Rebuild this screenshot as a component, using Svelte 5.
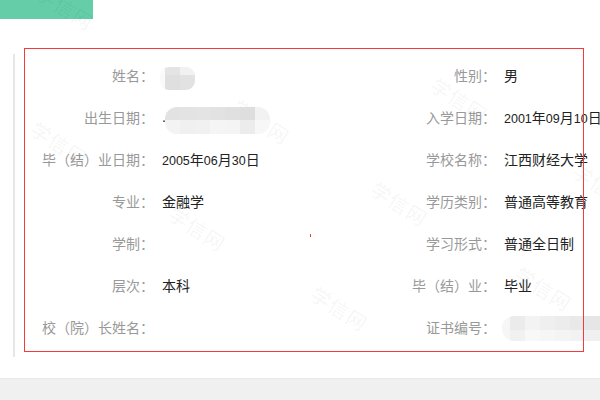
<script>
  const fields = [
    ["姓名", ""],
    ["性别", "男"],
    ["出生日期", "."],
    ["入学日期", "2001年09月10日"],
    ["毕（结）业日期", "2005年06月30日"],
    ["学校名称", "江西财经大学"],
    ["专业", "金融学"],
    ["学历类别", "普通高等教育"],
    ["学制", ""],
    ["学习形式", "普通全日制"],
    ["层次", "本科"],
    ["毕（结）业", "毕业"],
    ["校（院）长姓名", ""],
    ["证书编号", ""],
  ];

  const marks = [
    [41, 114], [243, 92], [441, 70], [381, 174], [179, 199],
    [321, 279], [525, 259], [583, 156], [47, -22],
  ];

  // mosaic patches hiding personal data
  const patches = [
    {
      x: 160, y: 67, w: 35, h: 23, radius: "9px",
      cells: [
        [5, 8, "#fafafa"], [15, 8, "#e4e4e4"], [15, 8, "#f1f1f1"],
        [5, 15, "#fafafa"], [15, 15, "#dfdfdf"], [15, 15, "#e2e2e2"],
      ],
    },
    {
      x: 165, y: 107, w: 105, h: 27, radius: "12px",
      cells: [
        [15, 13, "#e2e2e2"], [15, 13, "#e3e3e3"], [15, 13, "#e4e4e4"], [15, 13, "#e2e2e2"],
        [15, 13, "#e0e0e0"], [15, 13, "#dedede"], [15, 13, "#f2f2f2"],
        [15, 14, "#f3f3f3"], [15, 14, "#f0f0f0"], [15, 14, "#f1f1f1"], [15, 14, "#f5f5f5"],
        [15, 14, "#f4f4f4"], [15, 14, "#ececec"], [15, 14, "#f7f7f7"],
      ],
    },
    {
      x: 502, y: 316, w: 98, h: 25, radius: "12px 0 0 12px",
      cells: [
        [8, 14, "#f6f6f6"], [15, 14, "#ebebeb"], [15, 14, "#f3f3f3"], [15, 14, "#efefef"],
        [15, 14, "#ececec"], [15, 14, "#e9e9e9"], [15, 14, "#e6e6e6"],
        [8, 11, "#f6f6f6"], [15, 11, "#f1f1f1"], [15, 11, "#f8f8f8"], [15, 11, "#f6f6f6"],
        [15, 11, "#f4f4f4"], [15, 11, "#f2f2f2"], [15, 11, "#f0f0f0"],
      ],
    },
  ];

  function parts(value) {
    return value.split(/(\d+)/).filter((p) => p !== "");
  }
</script>

<div class="page">
  <div class="tab"><span>证书</span></div>

  <section class="info">
    {#each fields as [label, value]}
      <div class="field">
        <span class="label">{label}：</span>
        <span class="value">
          {#each parts(value) as part}
            {#if /^\d+$/.test(part)}<span class="num">{part}</span>{:else}{part}{/if}
          {/each}
        </span>
      </div>
    {/each}
  </section>

  <div class="footer"></div>

  {#each marks as [x, y]}
    <span class="mark" style="left: {x}px; top: {y}px">学信网</span>
  {/each}

  {#each patches as p}
    <div
      class="patch"
      style="left: {p.x}px; top: {p.y}px; width: {p.w}px; height: {p.h}px; border-radius: {p.radius}"
    >
      {#each p.cells as [w, h, color]}
        <i style="width: {w}px; height: {h}px; background: {color}"></i>
      {/each}
    </div>
  {/each}

  <div class="outline"></div>
  <div class="tick"></div>
</div>

<style>
  :global(body) {
    margin: 0;
  }

  .page {
    position: relative;
    width: 600px;
    height: 400px;
    overflow: hidden;
    background: #fff;
    font-family: "Liberation Sans", "Noto Sans CJK SC", sans-serif;
    font-size: 14px;
  }

  .tab {
    width: 93px;
    height: 19px;
    overflow: hidden;
    background: #66cda9;
    color: #fff;
    box-sizing: border-box;
    padding-left: 11px;
    line-height: 6px;
    font-size: 16px;
  }

  .tab span {
    display: block;
    margin-top: -10px;
  }

  .info {
    display: grid;
    grid-template-columns: 342px 342px;
    grid-auto-rows: 42px;
    width: 700px;
    height: 303px;
    box-sizing: border-box;
    margin: 35px 0 0 13px;
    border-left: 2px solid #e6e6e6;
  }

  .field {
    display: flex;
    align-items: center;
    gap: 8px;
    white-space: nowrap;
  }

  .label {
    width: 139px;
    flex: none;
    text-align: right;
    color: #999;
  }

  .value {
    color: #222;
  }

  .num {
    font-size: 12.5px;
  }

  .footer {
    height: 22px;
    margin-top: 21px;
    background: #f0f0f0;
    border-top: 1px solid #e9e9e9;
  }

  .mark {
    position: absolute;
    font-size: 20px;
    font-weight: 700;
    letter-spacing: 1px;
    color: rgba(0, 0, 0, 0.03);
    white-space: nowrap;
    transform: rotate(33deg);
    transform-origin: left top;
  }

  .patch {
    position: absolute;
    display: flex;
    flex-wrap: wrap;
    align-content: flex-start;
    overflow: hidden;
  }

  .patch i {
    display: block;
    flex: none;
  }

  .outline {
    position: absolute;
    left: 24px;
    top: 48px;
    width: 558px;
    height: 302px;
    border: 1px solid #f23c3c;
  }

  .tick {
    position: absolute;
    left: 310px;
    top: 234px;
    width: 1px;
    height: 3px;
    background: #f23c3c;
  }
</style>
